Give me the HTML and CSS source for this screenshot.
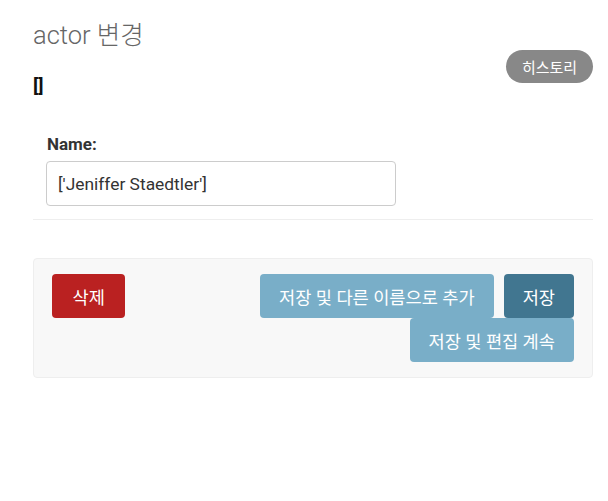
FILE: index.html
```html
<!DOCTYPE html>
<html lang="ko">
<head>
<meta charset="utf-8">
<title>actor 변경</title>
<link rel="stylesheet" href="styles.css">
</head>
<body>
<div class="content">
  <h1 class="title">actor 변경</h1>
  <div class="subhead">
    <h2 class="repr">[]</h2>
    <a class="history" href="#">히스토리</a>
  </div>
  <div class="fieldset">
    <label class="label" for="name">Name:</label>
    <input class="input" id="name" type="text" value="['Jeniffer Staedtler']">
  </div>
  <div class="submit-row">
    <a class="btn btn-delete" href="#">삭제</a>
    <div class="actions">
      <div class="action-line">
        <button class="btn btn-secondary" type="button">저장 및 다른 이름으로 추가</button>
        <button class="btn btn-primary" type="button">저장</button>
      </div>
      <div class="action-line">
        <button class="btn btn-secondary" type="button">저장 및 편집 계속</button>
      </div>
    </div>
  </div>
</div>
</body>
</html>
```
FILE: styles.css
```css
* { box-sizing: border-box; }
html, body { margin: 0; padding: 0; background: #fff; }
body {
  font-family: Roboto, "Noto Sans CJK KR", sans-serif;
  color: #333;
}
.content {
  padding: 20px 15px 0 33px;
}
.title {
  margin: 0;
  font-size: 25.5px;
  line-height: 31px;
  font-weight: 300;
  color: #666;
}
.subhead {
  display: flex;
  justify-content: space-between;
  align-items: flex-start;
  margin-top: -1px;
}
.repr {
  margin: 24px 0 0;
  font-size: 19px;
  line-height: 23px;
  font-weight: 700;
  color: #111;
}
.history {
  display: flex;
  align-items: center;
  justify-content: center;
  width: 87px;
  height: 33px;
  border-radius: 17px;
  background: #888;
  color: #fff;
  font-size: 15px;
  text-decoration: none;
}
.fieldset {
  display: flex;
  flex-direction: column;
  align-items: flex-start;
  padding: 37px 0 13px 13px;
  border-bottom: 1px solid #eee;
}
.label {
  font-size: 17px;
  line-height: 21px;
  font-weight: 700;
  color: #333;
  margin: 0 0 6px 1px;
}
.input {
  width: 350px;
  height: 45px;
  border: 1px solid #ccc;
  border-radius: 4px;
  padding: 0 11px;
  font-family: Roboto, "Noto Sans CJK KR", sans-serif;
  font-size: 17.4px;
  color: #333;
  background: #fff;
}
.submit-row {
  margin-top: 38px;
  display: flex;
  justify-content: space-between;
  align-items: flex-start;
  padding: 15px 18px 15px 18px;
  background: #f8f8f8;
  border: 1px solid #eee;
  border-radius: 4px;
}
.actions {
  display: flex;
  flex-direction: column;
  align-items: flex-end;
}
.action-line {
  display: flex;
  gap: 10px;
}
.btn {
  display: inline-flex;
  align-items: center;
  justify-content: center;
  height: 44px;
  padding: 0 19px;
  border: 0;
  border-radius: 4px;
  font-family: Roboto, "Noto Sans CJK KR", sans-serif;
  font-size: 17.6px;
  color: #fff;
  text-decoration: none;
  white-space: nowrap;
}
.btn-delete { background: #ba2121; padding: 0 20.5px; }
.btn-secondary { background: #79aec8; }
.btn-primary { background: #417690; }
```
